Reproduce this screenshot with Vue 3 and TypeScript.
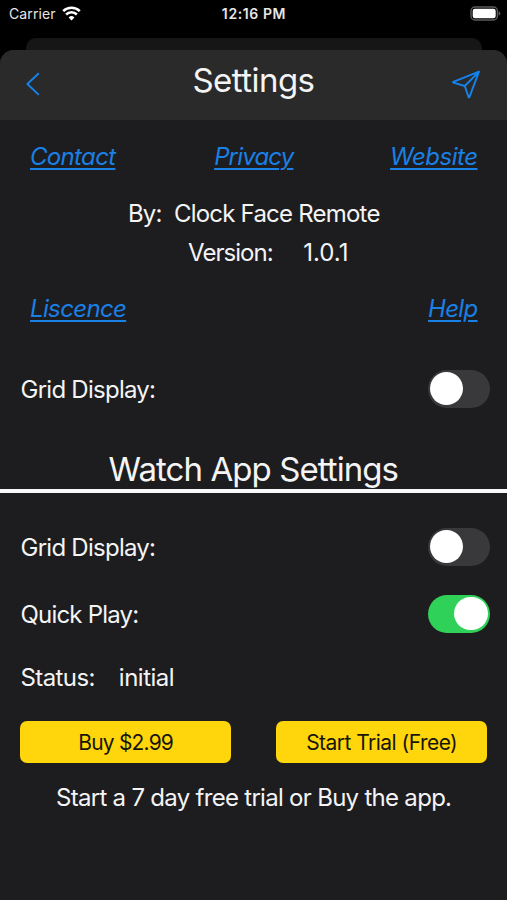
<script setup lang="ts">
import { reactive } from 'vue'

type ToggleKey = 'phoneGrid' | 'watchGrid' | 'quickPlay'

const toggles = reactive<Record<ToggleKey, boolean>>({
  phoneGrid: false,
  watchGrid: false,
  quickPlay: true,
})

const watchRows: { key: ToggleKey; label: string; cls: string }[] = [
  { key: 'watchGrid', label: 'Grid Display:', cls: 'grid-label' },
  { key: 'quickPlay', label: 'Quick Play:', cls: 'quick-label' },
]

const flip = (key: ToggleKey) => {
  toggles[key] = !toggles[key]
}
</script>

<template>
  <div class="screen">
    <div class="statusbar">
      <div class="carrier">
        <span class="carrier-name">Carrier</span>
        <svg class="wifi" width="19" height="15" viewBox="0 0 19 15">
          <path d="M1.2 5.2A11.8 11.8 0 0 1 17.8 5.2" />
          <path d="M4.1 8.5A7.6 7.6 0 0 1 14.9 8.5" />
          <path class="dot" d="M9.5 14.4L6.6 11.4A4.3 4.3 0 0 1 12.4 11.4Z" />
        </svg>
      </div>
      <span class="time">12:16 PM</span>
      <svg class="battery" width="31" height="15" viewBox="0 0 31 15">
        <rect class="shell" x="1" y="1" width="26.4" height="13" rx="4" />
        <rect class="level" x="2.7" y="2.7" width="23" height="9.6" rx="2.2" />
        <path class="nub" d="M28.6 5.2Q30.4 6 30.4 7.5T28.6 9.8Z" />
      </svg>
    </div>

    <div class="back-sheet"></div>

    <main class="sheet">
      <header class="header">
        <button class="icon-btn" aria-label="Back">
          <svg width="16" height="26" viewBox="0 0 16 26">
            <path d="M13.8 2.2L2.4 13L13.8 23.9" />
          </svg>
        </button>
        <h1>Settings</h1>
        <button class="icon-btn send" aria-label="Send">
          <svg width="30" height="30" viewBox="0 0 30 30">
            <path d="M28 2.7L2.3 12.9Q1.7 13.3 2.4 13.6L13.8 17L17.6 28.2Q18 28.8 18.4 28.1ZM28 2.7L13.8 17" />
          </svg>
        </button>
      </header>

      <nav class="links">
        <a class="contact">Contact</a>
        <a class="privacy">Privacy</a>
        <a class="website">Website</a>
      </nav>

      <div class="info by"><span class="by-key">By:</span><span class="by-value">Clock Face Remote</span></div>
      <div class="info version"><span class="version-key">Version:</span><span>1.0.1</span></div>

      <nav class="links">
        <a class="license">Liscence</a>
        <a class="help">Help</a>
      </nav>

      <div class="row phone-row">
        <span class="grid-label">Grid Display:</span>
        <button class="toggle" :class="{ on: toggles.phoneGrid }" aria-label="Grid Display" @click="flip('phoneGrid')">
          <i class="knob"></i>
        </button>
      </div>

      <h2>Watch App Settings</h2>

      <section class="watch">
        <div v-for="r in watchRows" :key="r.key" class="row">
          <span :class="r.cls">{{ r.label }}</span>
          <button class="toggle" :class="{ on: toggles[r.key] }" :aria-label="r.label" @click="flip(r.key)">
            <i class="knob"></i>
          </button>
        </div>
        <div class="row status"><span class="status-key">Status:</span><span class="status-value">initial</span></div>
      </section>

      <div class="actions">
        <button class="buy">Buy $2.99</button>
        <button class="trial">Start Trial (Free)</button>
      </div>
      <p class="note">Start a 7 day free trial or Buy the app.</p>
    </main>
  </div>
</template>

<style>
body {
  background: #000;
}
</style>

<style scoped>
.screen {
  box-sizing: border-box;
  display: flex;
  flex-direction: column;
  height: 900px;
  overflow: hidden;
  background: #000;
  color: #f4f4f5;
  font: 24px/40px Inter, 'Liberation Sans', sans-serif;
  white-space: nowrap;
}

button {
  padding: 0;
  border: 0;
  background: none;
  font: inherit;
  color: inherit;
}

.statusbar {
  display: grid;
  grid-template-columns: 1fr auto 1fr;
  align-items: center;
  height: 28px;
  padding: 0 6px 0 9px;
  font-size: 14px;
  line-height: 28px;
  color: #e6e6e6;
}

.carrier {
  display: flex;
  align-items: center;
  gap: 6px;
}

.carrier-name {
  letter-spacing: 0.1px;
}

.wifi {
  margin-top: -2px;
  fill: none;
  stroke: #fff;
  stroke-width: 2.5;
}

.wifi .dot {
  fill: #fff;
  stroke: none;
}

.time {
  font-weight: 600;
  letter-spacing: 0.6px;
  margin-right: 2px;
}

.battery {
  justify-self: end;
  margin-top: -1px;
}

.shell {
  fill: none;
  stroke: #5c5c5c;
  stroke-width: 1.4;
}

.level {
  fill: #fff;
}

.nub {
  fill: #5c5c5c;
}

.back-sheet {
  height: 12px;
  margin: 10px 25px 0 26px;
  border-radius: 10px 10px 0 0;
  background: #161616;
}

.sheet {
  flex: 1;
  display: flex;
  flex-direction: column;
  overflow: hidden;
  border-radius: 14px 14px 0 0;
  background: #1d1d1f;
}

.header {
  display: flex;
  box-sizing: border-box;
  height: 69.5px;
  padding: 0 26px 0 25px;
  background: #2a2a2a;
}

.header h1 {
  flex: 1;
  margin: 10px 0 0 151.5px;
  font-size: 33px;
  font-weight: 400;
  line-height: 40px;
  letter-spacing: -0.55px;
}

.icon-btn {
  height: 68px;
  display: flex;
  align-items: center;
  color: #1583ec;
}

.icon-btn svg {
  fill: none;
  stroke: currentColor;
  stroke-width: 1.9;
  stroke-linejoin: round;
}

.links {
  box-sizing: border-box;
  display: flex;
  align-items: center;
  justify-content: space-between;
  height: 73px;
  padding: 2px 29.5px 0 30px;
  color: #1a80e6;
  font-style: italic;
}

.links a {
  text-decoration: underline;
  text-decoration-thickness: 2px;
  text-underline-offset: 2.5px;
}

.contact { letter-spacing: -0.67px; }
.privacy { letter-spacing: -0.83px; margin-left: 2px; }
.website { letter-spacing: -0.5px; }
.license { letter-spacing: -0.64px; }
.help { letter-spacing: -0.68px; }

.info {
  box-sizing: border-box;
  display: flex;
  height: 39.5px;
  padding-top: 1.2px;
}

.by {
  padding-left: 128px;
  gap: 12.5px;
}

.by-key { letter-spacing: -0.9px; }
.by-value { letter-spacing: -0.78px; }

.version {
  padding-left: 188px;
  gap: 30.5px;
}

.version-key { letter-spacing: -0.95px; }

.row {
  box-sizing: border-box;
  display: flex;
  align-items: center;
  justify-content: space-between;
  height: 67px;
  padding: 0 17px 0 20.5px;
}

.row > span {
  padding-top: 2px;
}

.phone-row {
  height: 88px;
}

.grid-label { letter-spacing: -0.74px; }
.quick-label { letter-spacing: -0.8px; }

.toggle {
  display: flex;
  align-items: center;
  box-sizing: border-box;
  width: 62.5px;
  height: 38px;
  padding: 0 2.2px;
  border-radius: 19px;
  background: #39393c;
}

.toggle.on {
  justify-content: flex-end;
  background: #30d158;
}

.knob {
  width: 33.5px;
  height: 33.5px;
  border-radius: 50%;
  background: #fff;
}

h2 {
  box-sizing: border-box;
  height: 60px;
  margin: 0;
  padding: 16.5px 0 0 108.5px;
  border-bottom: 4px solid #f8f8fa;
  font-size: 33px;
  font-weight: 400;
  line-height: 40px;
  letter-spacing: -0.93px;
}

.watch {
  padding-top: 20.5px;
}

.status {
  height: 59px;
  justify-content: flex-start;
  gap: 24px;
}

.status-key { letter-spacing: -0.59px; }
.status-value { letter-spacing: -0.5px; }

.actions {
  display: flex;
  justify-content: space-between;
  margin: 15px 19.8px 0 20.2px;
}

.actions button {
  width: 211px;
  height: 42px;
  border-radius: 7px;
  background: #ffd60b;
  color: #17150a;
  font-size: 21px;
  line-height: 43px;
}

.buy { letter-spacing: -0.82px; }
.trial { letter-spacing: -0.53px; }

.note {
  margin: 15px 0 0 56px;
  letter-spacing: -0.71px;
}
</style>
